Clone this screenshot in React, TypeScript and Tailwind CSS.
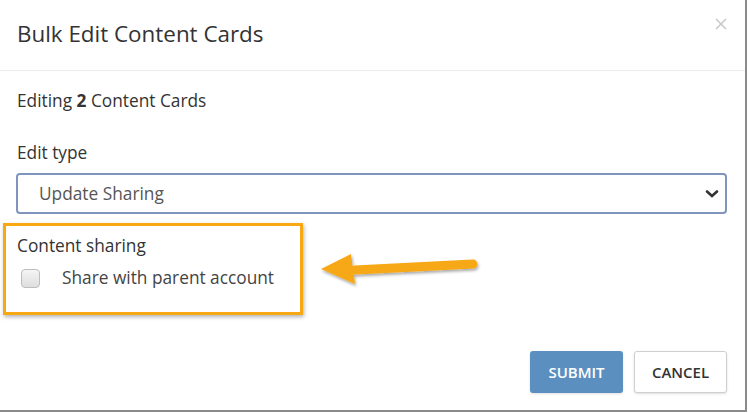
import React from "react";

export default function App() {
  return (
    <div className="w-[748px] h-[413px] bg-white overflow-hidden font-['Open_Sans',sans-serif] text-[#333]">
      <div className="relative w-[747px] h-[412px] border-r-2 border-b-2 border-[#8a8a8a] bg-white flex flex-col">
        {/* header */}
        <div className="h-[71px] flex items-center justify-between pl-[17px] pr-[18px] border-b border-[#ececec] shrink-0">
          <h2 className="text-[22.4px] leading-none text-[#333] pb-[2px]">Bulk Edit Content Cards</h2>
          <svg width="12" height="12" viewBox="0 0 12 12" className="mb-[22px]">
            <path d="M1 1 L11 11 M11 1 L1 11" stroke="#cacaca" strokeWidth="1.6" />
          </svg>
        </div>

        {/* body */}
        <div className="flex-1 pl-[17px] pr-[18px] pt-[19px]">
          <p className="text-[17.3px] leading-[22px]">
            Editing <b className="font-bold">2</b> Content Cards
          </p>
          <label className="block mt-[30px] text-[17.3px] leading-[22px]">Edit type</label>
          <div className="mt-[9px] ml-[-1px] h-[41px] border-2 border-[#7f95bd] rounded-[4px] flex items-center justify-between pl-[21px] pr-[6px]">
            <span className="text-[17.3px] text-[#555]">Update Sharing</span>
            <svg width="14" height="10" viewBox="0 0 14 10" className="text-[#333]">
              <path d="M2 2.5 L7 7 L12 2.5" fill="none" stroke="currentColor" strokeWidth="2.6" strokeLinecap="round" />
            </svg>
          </div>

          <div className="mt-[21px] text-[17.3px] leading-[22px]">Content sharing</div>
          <label className="mt-[10px] h-[22px] flex items-center">
            <span className="ml-[4px] w-[19px] h-[19px] rounded-[4px] border border-[#bdbdbd] bg-gradient-to-b from-[#f5f5f5] to-[#dedede]" />
            <span className="ml-[22px] text-[17.3px] leading-[22px] text-[#444]">Share with parent account</span>
          </label>

          <div className="mt-[62px] flex justify-end gap-[11px]">
            <button className="w-[93px] h-[42px] rounded-[3px] bg-[#5a8fc0] text-white text-[15px] font-semibold shadow-sm">
              SUBMIT
            </button>
            <button className="w-[93px] h-[42px] rounded-[3px] bg-white border border-[#cfcfcf] text-[#333] text-[15px] font-semibold shadow-sm">
              CANCEL
            </button>
          </div>
        </div>

        {/* annotation: highlight box */}
        <div className="absolute left-[3px] top-[223px] w-[300px] h-[92px] border-[3px] border-[#f7a812] shadow-[1px_2px_4px_rgba(0,0,0,0.3)] pointer-events-none" />

        {/* annotation: arrow */}
        <svg className="absolute left-[315px] top-[248px] pointer-events-none" width="170" height="40" viewBox="0 0 170 40">
          <defs>
            <filter id="sh" x="-10%" y="-50%" width="120%" height="200%">
              <feDropShadow dx="1" dy="2" stdDeviation="1.5" floodColor="#000" floodOpacity="0.35" />
            </filter>
          </defs>
          <g filter="url(#sh)">
            <path d="M40 22 L158 16" stroke="#f7a812" strokeWidth="9" strokeLinecap="round" fill="none" />
            <path d="M6 21 L36 6 L40 36 Z" fill="#f7a812" />
          </g>
        </svg>
      </div>
    </div>
  );
}
